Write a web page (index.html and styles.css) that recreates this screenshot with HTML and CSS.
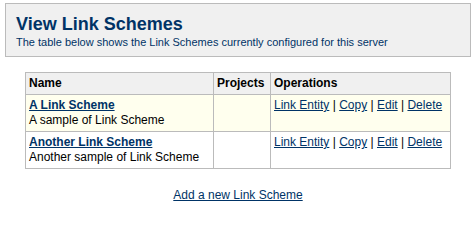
FILE: index.html
```html
<!DOCTYPE html>
<html>
<head>
<meta charset="utf-8">
<link rel="stylesheet" href="styles.css">
</head>
<body>
<div class="page">
  <div class="header">
    <h1 class="title">View Link Schemes</h1>
    <p class="desc">The table below shows the Link Schemes currently configured for this server</p>
  </div>
  <table class="grid">
    <colgroup>
      <col class="c-name">
      <col class="c-proj">
      <col class="c-ops">
    </colgroup>
    <thead>
      <tr>
        <th>Name</th>
        <th>Projects</th>
        <th>Operations</th>
      </tr>
    </thead>
    <tbody>
      <tr class="odd">
        <td><a href="#" class="scheme">A Link Scheme</a><br>A sample of Link Scheme</td>
        <td></td>
        <td><a href="#">Link Entity</a> | <a href="#">Copy</a> | <a href="#">Edit</a> | <a href="#">Delete</a></td>
      </tr>
      <tr>
        <td><a href="#" class="scheme">Another Link Scheme</a><br>Another sample of Link Scheme</td>
        <td></td>
        <td><a href="#">Link Entity</a> | <a href="#">Copy</a> | <a href="#">Edit</a> | <a href="#">Delete</a></td>
      </tr>
    </tbody>
  </table>
  <div class="add"><a href="#">Add a new Link Scheme</a></div>
</div>
</body>
</html>
```
FILE: styles.css
```css
html, body {
  margin: 0;
  padding: 0;
  background: #ffffff;
}
body {
  font-family: "Liberation Sans", Arial, sans-serif;
  font-size: 12px;
  color: #000000;
}
.page {
  padding: 3px 5px 0 5px;
}
.header {
  border: 1px solid #bbbbbb;
  background: #f0f0f0;
  padding: 10px 10px 7px 10px;
}
.title {
  margin: 0;
  font-size: 18px;
  line-height: 20px;
  font-weight: bold;
  color: #003366;
}
.desc {
  margin: 2px 0 0 0;
  font-size: 11px;
  line-height: 13px;
  color: #003366;
}
.grid {
  margin: 15px auto 0 auto;
  border-collapse: collapse;
  table-layout: fixed;
  width: 425px;
}
.c-name { width: 188px; }
.c-proj { width: 57px; }
.c-ops { width: 180px; }
.grid th, .grid td {
  border: 1px solid #bbbbbb;
  padding: 3px 3px;
  line-height: 15px;
  text-align: left;
  vertical-align: top;
}
.grid th {
  background: #f0f0f0;
  font-weight: bold;
}
.grid tr.odd td {
  background: #ffffee;
}
a {
  color: #003366;
  text-decoration: underline;
}
a.scheme {
  font-weight: bold;
}
.add {
  margin-top: 19px;
  text-align: center;
  line-height: 15px;
}
```
